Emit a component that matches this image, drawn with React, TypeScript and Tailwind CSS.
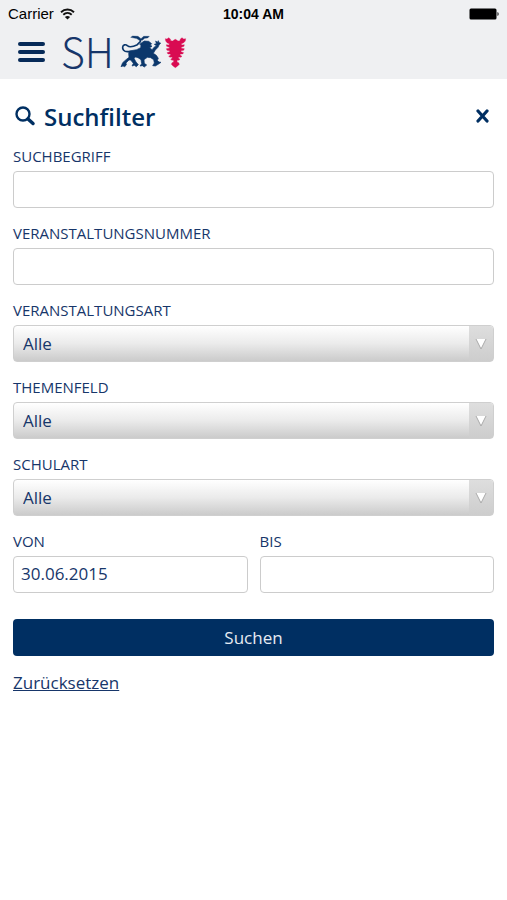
import { useState } from "react";

const options = ["Alle"];

function WifiIcon() {
  return (
    <svg width="15" height="12" viewBox="0 0 15 12" fill="none" stroke="#111" strokeWidth="1.900" aria-hidden="true">
      <path d="M1 4.200C4.700.600 10.300.600 14 4.200" />
      <path d="M3.300 6.700c2.400-2.200 6-2.200 8.400 0" />
      <path d="M7.500 11.500L4.900 8.900c1.500-1.300 3.700-1.300 5.200 0z" fill="#111" stroke="none" />
    </svg>
  );
}

function Battery() {
  return (
    <svg width="30" height="12" viewBox="0 0 30 12" aria-hidden="true">
      <rect x="0.5" y="0.5" width="27" height="11" rx="1.5" fill="#000" />
      <path d="M28.5 4v4c1.500-.5 1.500-3.500 0-4z" fill="#000" />
    </svg>
  );
}

function Logo() {
  return (
    <svg width="68" height="34" viewBox="30 22 204 102" aria-hidden="true">
      {/* Löwe */}
      <g fill="#0b376b" stroke="#0b376b">
        <path
          d="M76 72H52C42 72 37 65 38 58C39 51 47 49 52 54C59 60 70 57 82 51L91 42V35"
          fill="none"
          strokeWidth="5"
        />
        <path
          d="M91 38C84 38 83 32 76 32L62 29L68 25L84 26L93 33L101 26L118 26L113 31L104 32L97 38Z"
          strokeWidth="1"
        />
        <path
          d="M58 70L80 66L92 60L93 52L89 50L95 45L103 40L116 41L125 48L121 52L126 56L119 60L126 66L134 57L140 55L133 50L139 48L137 40L142 44L145 39L147 45L152 46L147 52L144 59L136 67L130 77L139 83L145 92L142 98L147 103L153 104L146 109L136 115L128 114L133 106L131 96L122 90L112 89L102 96L103 107L110 112L103 118L97 114L90 115L95 108L93 96L84 90L77 88L72 92L78 103L85 111L79 117L73 113L66 115L70 107L62 97L57 97L48 106L49 112L44 117L39 115L33 117L38 105L48 96L57 89L56 77Z"
          strokeWidth="2"
          strokeLinejoin="round"
        />
      </g>
      {/* Nesselblatt */}
      <path
        fill="#d90b52"
        stroke="#d90b52"
        strokeWidth="1"
        strokeLinejoin="round"
        d="M166 33L171 34L176 30L181 34L182 39L188 40L192 37L196 35L200 37L204 40L210 39L211 34L216 30L221 34L227 33L226 40L220 46L214 48L215 52L223 51L222 56L214 59L214 62L223 63L221 68L213 69L213 72L221 75L218 79L211 79L210 82L216 86L212 89L206 88L205 91L210 95L206 98L202 97L201 103L206 105L208 110L203 115L196 120L189 115L184 110L186 105L191 103L190 97L186 98L182 95L187 91L186 88L180 89L176 86L182 82L181 79L174 79L171 75L179 72L179 69L171 68L169 63L178 62L178 59L170 56L169 51L177 52L178 48L172 46L167 40Z"
      />
    </svg>
  );
}

function SearchIcon() {
  return (
    <svg width="23" height="22" viewBox="-1 0 23 22" fill="none" stroke="#002f62" strokeLinecap="round" aria-hidden="true">
      <circle cx="9" cy="8" r="6.500" strokeWidth="2.400" />
      <path d="M14 13l5 4.500" strokeWidth="3.500" />
    </svg>
  );
}

function TextField({ id, label, value = "" }: { id: string; label: string; value?: string }) {
  return (
    <div className="min-w-0 flex-1">
      <label htmlFor={id} className="block text-[15px] leading-[18px] uppercase">
        {label}
      </label>
      <input
        id={id}
        type="text"
        defaultValue={value}
        className="mt-1.5 block h-[37px] w-full rounded-[4px] border border-[#cccccc] bg-white px-[7px] pb-0.5 text-[17px]"
      />
    </div>
  );
}

function SelectField({ id, label }: { id: string; label: string }) {
  return (
    <div>
      <label htmlFor={id} className="block text-[15px] leading-[18px] uppercase">
        {label}
      </label>
      <div className="relative mt-1.5">
        <select
          id={id}
          className="block h-[37px] w-full appearance-none rounded-[4px] border border-[#cfcfcf] bg-linear-to-b from-white via-[#ebebeb] to-[#cbcbcb] px-[9px] text-[17px]"
        >
          {options.map((option) => (
            <option key={option}>{option}</option>
          ))}
        </select>
        <span className="pointer-events-none absolute inset-y-px right-px flex w-6 items-center justify-center rounded-r-[3px] bg-linear-to-b from-[#dedede] to-[#cdcdcd]">
          <svg width="12" height="12" viewBox="0 0 12 12" aria-hidden="true">
            <path d="M1 1h10L6 11z" fill="#fff" />
            <path d="M1 1l5 10 5-10" fill="none" stroke="#aaa" />
          </svg>
        </span>
      </div>
    </div>
  );
}

export default function App() {
  const [open, setOpen] = useState(true);

  return (
    <div className="min-h-screen bg-white text-[#17366a]" style={{ fontFamily: "'Open Sans', sans-serif" }}>
      <header className="bg-[#eff0f2]">
        <div
          className="grid h-7 grid-cols-3 items-center px-2 text-sm text-black"
          style={{ fontFamily: "'Liberation Sans', sans-serif" }}
        >
          <span className="flex items-center gap-1.5 text-[15px]">
            Carrier
            <WifiIcon />
          </span>
          <span className="text-center font-bold">10:04 AM</span>
          <span className="flex justify-end">
            <Battery />
          </span>
        </div>
        <div className="flex h-[51px] items-center pb-1 pl-[18px]">
          <button type="button" aria-label="Menü" className="flex w-[27px] flex-col gap-1">
            <span className="h-1 w-full rounded-full bg-[#062a58]" />
            <span className="h-1 w-full rounded-full bg-[#062a58]" />
            <span className="h-1 w-full rounded-full bg-[#062a58]" />
          </button>
          <a href="#" className="ml-4 flex items-center gap-1.5">
            <span
              className="pb-0.5 text-[41px] leading-none font-light"
              style={{ fontFamily: "'Noto Sans CJK SC', 'Open Sans', sans-serif" }}
            >
              SH
            </span>
            <Logo />
          </a>
        </div>
      </header>

      {open && (
        <form className="px-[13px] pt-5" onSubmit={(e) => e.preventDefault()}>
          <div className="flex h-9 items-center justify-between text-[#002f62]">
            <h1 className="flex items-center gap-2 text-2xl font-semibold">
              <SearchIcon />
              Suchfilter
            </h1>
            <button type="button" aria-label="Schließen" className="pr-[5px] pb-0.5" onClick={() => setOpen(false)}>
              <svg width="13" height="14" viewBox="0 0 13 14" aria-hidden="true">
                <path d="M2 2l9 10M11 2L2 12" stroke="#002f62" strokeWidth="3.200" strokeLinecap="round" />
              </svg>
            </button>
          </div>

          <div className="mt-3 flex flex-col gap-4">
            <TextField id="suchbegriff" label="Suchbegriff" />
            <TextField id="nummer" label="Veranstaltungsnummer" />
            <SelectField id="art" label="Veranstaltungsart" />
            <SelectField id="themenfeld" label="Themenfeld" />
            <SelectField id="schulart" label="Schulart" />
            <div className="flex gap-3">
              <TextField id="von" label="Von" value="30.06.2015" />
              <TextField id="bis" label="Bis" />
            </div>
          </div>

          <button type="submit" className="mt-[26px] block h-[37px] w-full rounded-[4px] bg-[#002f62] text-[17px] text-[#e6ebf2]">
            Suchen
          </button>
          <a href="#" className="mt-[15px] inline-block text-[17px] leading-6 underline">
            Zurücksetzen
          </a>
        </form>
      )}
    </div>
  );
}
